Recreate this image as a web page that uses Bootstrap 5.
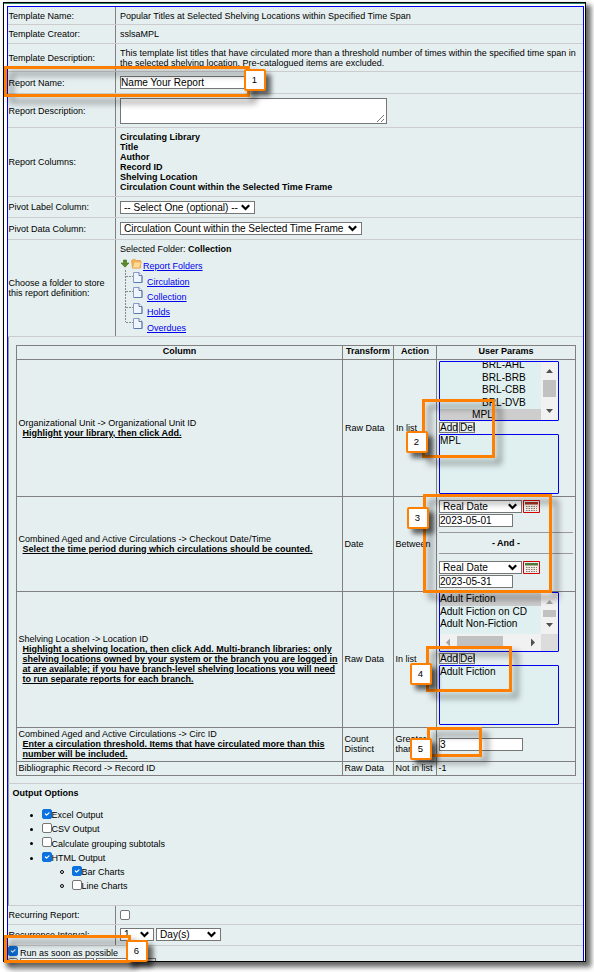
<!DOCTYPE html>
<html lang="en">
<head>
<meta charset="utf-8">
<title>Report template</title>
<meta name="viewport" content="width=device-width, initial-scale=1">
<link href="https://cdn.jsdelivr.net/npm/bootstrap@5.3.0/dist/css/bootstrap.min.css" rel="stylesheet">
<style>
body{background:#fff;font-family:"Liberation Sans",Arial,sans-serif;font-size:9px;line-height:10px;color:#000;width:594px;height:972px;overflow:hidden;position:relative}
.shot{width:583px;height:960px;margin:2px 0 0 3px;border:1px solid #000;background:#fff;box-shadow:4px 4px 5px 1px rgba(0,0,0,.6);padding:3px 1px 0 3px}
.strip{height:1px;background:#2f8068;margin:-3px -1px 2px -3px}
.sheet{border:1px solid #0000f0;border-bottom:0;background:#e6eff0;height:955px;overflow:hidden}
.line{border-bottom:1px solid #ccc}
.lab{width:108px;border-right:1px solid #808080;white-space:nowrap;padding-left:.5px}
.val{padding-left:4px;white-space:nowrap}
.h18{height:18px}.h19{height:19px}.h28{height:28px}.h22{height:22px}.h34{height:34px}.h69{height:69px}.h21{height:21px}.h97{height:97px}.h447{height:447px}.h122{height:122px}
.full{border-left:1px solid #999}
.field{border:1px solid #767676;background:#fff;height:13px;font-size:10.1px;line-height:11px;white-space:nowrap;padding:0;color:#000;border-radius:0;display:block}
.pick{padding:0 4px 0 3px;display:flex;justify-content:space-between;align-items:center}
.pick svg{flex:none}
.memo{width:267px;height:26px;border:1px solid #767676;background:#fff}
.ptable{display:grid;grid-template-columns:325px 50px 42px 138px;grid-template-rows:13px 136px 94px 135px 33px 13px;gap:1px;padding:1px;background:#808080;width:560px;margin:8px 0 0 7px}
.ptable>div{background:#e6eff0;padding-left:2px;overflow:hidden;white-space:nowrap}
.ptable>.cell{padding-left:1.500px;padding-bottom:1px}
.hint{font-weight:700;text-decoration:underline;padding-left:4px;text-underline-offset:1px}
.listbox{width:120px;height:60px;border:1px solid #0000f0;background:#e0f0f0;font-size:10.1px;line-height:12.6px;overflow:hidden;border-radius:1px}
.opts{width:101px;overflow:hidden}
.on{background:#cdcdcd}
.sbtn{height:11px;border:1px solid #777;font-size:10px;line-height:10px;background:#e6eff0;padding:0}
.bar{height:1px;background:#999;width:134px}
.form-check-input{width:10px;height:10px;margin:0;border:1px solid #767676;border-radius:2px!important;flex:none}
.form-check-input:checked{background-color:#0b72e0;border-color:#0b72e0}
.tick .form-check-input{margin-top:-3px}
.olist{font-size:9px;line-height:10px}
.bul{width:3px;height:3px;border-radius:50%;background:#000;margin-right:9px;flex:none}
.bul.o{background:none;border:1px solid #000;width:4px;height:4px;margin-right:8px}
.tree a{color:#0000ee;text-decoration:underline;text-underline-offset:1px}
.ring{position:absolute;border:3px solid #ff8000;filter:drop-shadow(6px 6px 3px rgba(0,0,0,.5))}
.num{position:absolute;width:22px;height:22px;border:2px solid #ff8000;border-radius:2px;background:#fff;text-align:center;font-size:9.5px;line-height:17px;box-shadow:5px 5px 5px rgba(0,0,0,.6);padding-right:1px}
.r1{left:4px;top:66px;width:246px;height:31px}.n1{left:244px;top:69px}
.r2{left:422px;top:399px;width:73px;height:59px}.n2{left:406px;top:431px}
.r3{left:423px;top:494px;width:129px;height:99px}.n3{left:407px;top:507px}
.r4{left:426px;top:646px;width:86px;height:46px}.n4{left:410px;top:663px}
.r5{left:427px;top:727px;width:55px;height:30px}.n5{left:410px;top:738px}
.r6{left:4px;top:935px;width:127px;height:28px}.n6{left:126px;top:940px}
</style>
<script src="https://cdn.jsdelivr.net/npm/bootstrap@5.3.0/dist/js/bootstrap.bundle.min.js"></script>
</head>
<body>
<svg width="0" height="0" class="position-absolute"><defs>
<g id="chev"><path d="M.8 1.300l3.700 3.700L8.200 1.300" fill="none" stroke="#000" stroke-width="2.200"/></g>
<g id="page"><path d="M.5.5h5.500l3 3v7h-8.500z" fill="#eef5ff" stroke="#8a9cc4"/><path d="M6 .5v3h3" fill="#fff" stroke="#5f78ac"/><path d="M9 4v6.500H1" fill="none" stroke="#5f78ac"/></g>
<g id="cal"><path d="M2 2h13v9H2z" fill="#f4eee6"/><path d="M3 6.500h11M3 8.500h11M3 10.500h11" stroke="#887870" stroke-dasharray="1.500 1"/><path d="M.5.5h16v12H.5z" fill="none" stroke="#d00000"/></g>
</defs></svg>
<main class="shot">
<div class="strip"></div>
<div class="sheet">
  <div class="d-flex line h18"><div class="lab d-flex align-items-center">Template Name:</div><div class="val d-flex align-items-center">Popular Titles at Selected Shelving Locations within Specified Time Span</div></div>
  <div class="d-flex line h19"><div class="lab d-flex align-items-center">Template Creator:</div><div class="val d-flex align-items-center">sslsaMPL</div></div>
  <div class="d-flex line h28"><div class="lab d-flex align-items-center">Template Description:</div><div class="val d-flex align-items-center"><div>This template list titles that have circulated more than a threshold number of times within the specified time span in<br>the selected shelving location. Pre-catalogued items are excluded.</div></div></div>
  <div class="d-flex line h22"><div class="lab d-flex align-items-center">Report Name:</div><div class="val d-flex align-items-center"><input class="field" style="width:126px" value="Name Your Report" aria-label="Report name"></div></div>
  <div class="d-flex line h34"><div class="lab d-flex align-items-center">Report Description:</div><div class="val d-flex align-items-center"><div class="memo d-flex justify-content-end align-items-end"><svg width="10" height="10"><path d="M1 9l7-7M5 9l3-3" stroke="#555" stroke-width=".8"/></svg></div></div></div>
  <div class="d-flex line h69"><div class="lab d-flex align-items-center">Report Columns:</div><div class="val d-flex align-items-center fw-bold"><div>Circulating Library<br>Title<br>Author<br>Record ID<br>Shelving Location<br>Circulation Count within the Selected Time Frame</div></div></div>
  <div class="d-flex line h21"><div class="lab d-flex align-items-center">Pivot Label Column:</div><div class="val d-flex align-items-center"><div class="field pick" style="width:135px">-- Select One (optional) --<svg width="9" height="7"><use href="#chev"/></svg></div></div></div>
  <div class="d-flex line h22"><div class="lab d-flex align-items-center">Pivot Data Column:</div><div class="val d-flex align-items-center"><div class="field pick" style="width:242px"><span style="letter-spacing:-.045px">Circulation Count within the Selected Time Frame</span><svg width="9" height="7"><use href="#chev"/></svg></div></div></div>
  <div class="d-flex line h97"><div class="lab d-flex align-items-center"><div>Choose a folder to store<br>this report definition:</div></div>
    <div class="val tree pt-1">
      <div>Selected Folder: <b>Collection</b></div>
      <div class="d-flex mt-1" style="height:78px">
        <svg width="23" height="75">
          <path d="M3.500 2h3v3h2.500L5 9.200 1 5h2.500z" fill="#5c8c28" stroke="#3e6a18" stroke-width=".6"/>
          <path d="M11.500 2.500l3-1.500 1.500 1.500h4.500v7.500h-8z" fill="#f5b45c" stroke="#e09838" stroke-width=".7"/><path d="M12.500 10l1.500-6H21.500l-2 6z" fill="#ffdc94" stroke="#e8a448" stroke-width=".7"/>
          <path d="M5.500 12v52M6 18.500h7M6 33.500h7M6 49.500h7M6 64.500h7" stroke="#888" stroke-dasharray="2 1" fill="none"/>
          <use href="#page" x="13" y="14"/><use href="#page" x="13" y="29"/><use href="#page" x="13" y="45"/><use href="#page" x="13" y="60"/>
        </svg>
        <div class="lh-1" style="padding-top:4px"><a href="#">Report Folders</a>
          <div class="ps-1" style="line-height:15.4px;padding-top:3.500px"><a href="#">Circulation</a><br><a href="#">Collection</a><br><a href="#">Holds</a><br><a href="#">Overdues</a></div>
        </div>
      </div>
    </div>
  </div>
  <div class="line full h447 overflow-hidden">
    <div class="ptable">
      <div class="fw-bold text-center p-0">Column</div><div class="fw-bold text-center p-0">Transform</div><div class="fw-bold text-center p-0">Action</div><div class="fw-bold text-center p-0">User Params</div>

      <div class="cell d-flex align-items-center"><div>Organizational Unit -&gt; Organizational Unit ID<div class="hint">Highlight your library, then click Add.</div></div></div>
      <div class="d-flex align-items-center">Raw Data</div><div class="d-flex align-items-center">In list</div>
      <div style="padding-top:1px">
        <div class="listbox d-flex"><div class="opts"><div style="margin-top:-3px;padding-left:42px">BRL-AHL<br>BRL-BRB<br>BRL-CBB<br>BRL-DVB</div><div class="on" style="padding-left:32px">MPL</div></div>
          <svg width="17" height="58"><path d="M0 0h17v58H0z" fill="#f1f1f1"/><path d="M2 18h13v17H2z" fill="#c1c1c1"/><path d="M5 11l3.500-4 3.500 4zM5 47l3.500 4 3.500-4z" fill="#505050"/></svg></div>
        <div class="d-flex" style="margin:1px 0;gap:1px"><div class="sbtn" style="width:19px">Add</div><div class="sbtn" style="width:16px">Del</div></div>
        <div class="listbox">MPL</div>
      </div>

      <div class="cell d-flex align-items-center"><div>Combined Aged and Active Circulations -&gt; Checkout Date/Time<div class="hint">Select the time period during which circulations should be counted.</div></div></div>
      <div class="cell d-flex align-items-center">Date</div><div class="cell d-flex align-items-center">Between</div>
      <div style="padding-top:3px">
        <div class="d-flex" style="gap:1px"><div class="field pick" style="width:83px">Real Date<svg width="9" height="7"><use href="#chev"/></svg></div><svg width="17" height="13"><path d="M2 2h13v2.500H2z" fill="#a83020"/><use href="#cal"/><path d="M2 2h13v2.500H2z" fill="#a83020"/></svg></div>
        <div class="field" style="width:74px;margin-top:1px">2023-05-01</div>
        <div class="bar" style="margin:5px 0 5px"></div><div class="fw-bold text-center" style="width:134px">- And -</div><div class="bar" style="margin:5px 0 7px"></div>
        <div class="d-flex" style="gap:1px"><div class="field pick" style="width:83px">Real Date<svg width="9" height="7"><use href="#chev"/></svg></div><svg width="17" height="13"><use href="#cal"/><path d="M2 2h13v2.500H2z" fill="#507838"/></svg></div>
        <div class="field" style="width:74px;margin-top:1px">2023-05-31</div>
      </div>

      <div class="cell d-flex align-items-center"><div>Shelving Location -&gt; Location ID<div class="hint">Highlight a shelving location, then click Add. Multi-branch libraries: only<br>shelving locations owned by your system or the branch you are logged in<br>at are available; if you have branch-level shelving locations you will need<br>to run separate reports for each branch.</div></div></div>
      <div class="cell d-flex align-items-center">Raw Data</div><div class="cell d-flex align-items-center">In list</div>
      <div>
        <div class="listbox"><div class="d-flex"><div class="opts" style="height:41px"><div class="on">Adult Fiction</div><div>Adult Fiction on CD</div><div>Adult Non-Fiction</div></div>
          <svg width="17" height="41"><path d="M0 0h17v41H0z" fill="#f1f1f1"/><path d="M2 17h13v7H2z" fill="#c1c1c1"/><path d="M5 11l3.500-4 3.500 4z" fill="#a3a3a3"/><path d="M5 30l3.500 4 3.500-4z" fill="#505050"/></svg></div>
          <svg width="118" height="17" class="d-block"><path d="M0 0h101v17H0z" fill="#f1f1f1"/><path d="M101 0h17v17h-17z" fill="#dcdcdc"/><path d="M17 2h46v13H17z" fill="#c1c1c1"/><path d="M10 4.500L6 8.500l4 4z" fill="#a3a3a3"/><path d="M91 4.500l4 4-4 4z" fill="#505050"/></svg></div>
        <div class="d-flex" style="margin:1px 0;gap:1px"><div class="sbtn" style="width:19px">Add</div><div class="sbtn" style="width:16px">Del</div></div>
        <div class="listbox">Adult Fiction</div>
      </div>

      <div class="cell d-flex align-items-center"><div>Combined Aged and Active Circulations -&gt; Circ ID<div class="hint">Enter a circulation threshold. Items that have circulated more than this<br>number will be included.</div></div></div>
      <div class="cell d-flex align-items-center">Count<br>Distinct</div><div class="cell d-flex align-items-center">Greater<br>than</div>
      <div class="d-flex align-items-center"><input class="field" style="width:84px" value="3" aria-label="Threshold"></div>

      <div class="cell d-flex align-items-center">Bibliographic Record -&gt; Record ID</div><div class="cell d-flex align-items-center">Raw Data</div><div class="cell d-flex align-items-center">Not in list</div><div class="cell d-flex align-items-center">-1</div>
    </div>
  </div>
  <div class="line full h122 olist" style="padding:4px 0 0 3.500px">
    <div class="fw-bold">Output Options</div>
    <div class="tick" style="padding:10px 0 0 17px">
      <div class="d-flex align-items-center" style="height:14px"><i class="bul"></i><input type="checkbox" class="form-check-input" checked><span>Excel Output</span></div>
      <div class="d-flex align-items-center" style="height:14px"><i class="bul"></i><input type="checkbox" class="form-check-input"><span>CSV Output</span></div>
      <div class="d-flex align-items-center" style="height:15px"><i class="bul"></i><input type="checkbox" class="form-check-input"><span>Calculate grouping subtotals</span></div>
      <div class="d-flex align-items-center" style="height:14px"><i class="bul"></i><input type="checkbox" class="form-check-input" checked><span>HTML Output</span></div>
      <div class="d-flex align-items-center" style="height:14px;padding-left:30px"><i class="bul o"></i><input type="checkbox" class="form-check-input" checked><span>Bar Charts</span></div>
      <div class="d-flex align-items-center" style="height:14px;padding-left:30px"><i class="bul o"></i><input type="checkbox" class="form-check-input"><span>Line Charts</span></div>
    </div>
  </div>
  <div class="d-flex line h19"><div class="lab d-flex align-items-center">Recurring Report:</div><div class="val d-flex align-items-center"><input type="checkbox" class="form-check-input"></div></div>
  <div class="d-flex line h21"><div class="lab d-flex align-items-center">Recurrence Interval:</div><div class="val d-flex align-items-start" style="gap:2px;padding-top:3px"><div class="field pick" style="width:34px">1<svg width="9" height="7"><use href="#chev"/></svg></div><div class="field pick" style="width:65px">Day(s)<svg width="9" height="7"><use href="#chev"/></svg></div></div></div>
  <div class="d-flex align-items-start" style="height:12px;gap:2px"><input type="checkbox" class="form-check-input" checked><span style="padding-top:2px">Run as soon as possible</span></div>
  <div class="d-flex" style="gap:2px"><input type="checkbox" class="form-check-input"><div class="field" style="width:74px"></div><div class="field" style="width:60px"></div></div>
</div>
</main>
<div class="ring r1"></div><div class="num n1">1</div>
<div class="ring r2"></div><div class="num n2">2</div>
<div class="ring r3"></div><div class="num n3">3</div>
<div class="ring r4"></div><div class="num n4">4</div>
<div class="ring r5"></div><div class="num n5">5</div>
<div class="ring r6"></div><div class="num n6">6</div>
</body>
</html>
